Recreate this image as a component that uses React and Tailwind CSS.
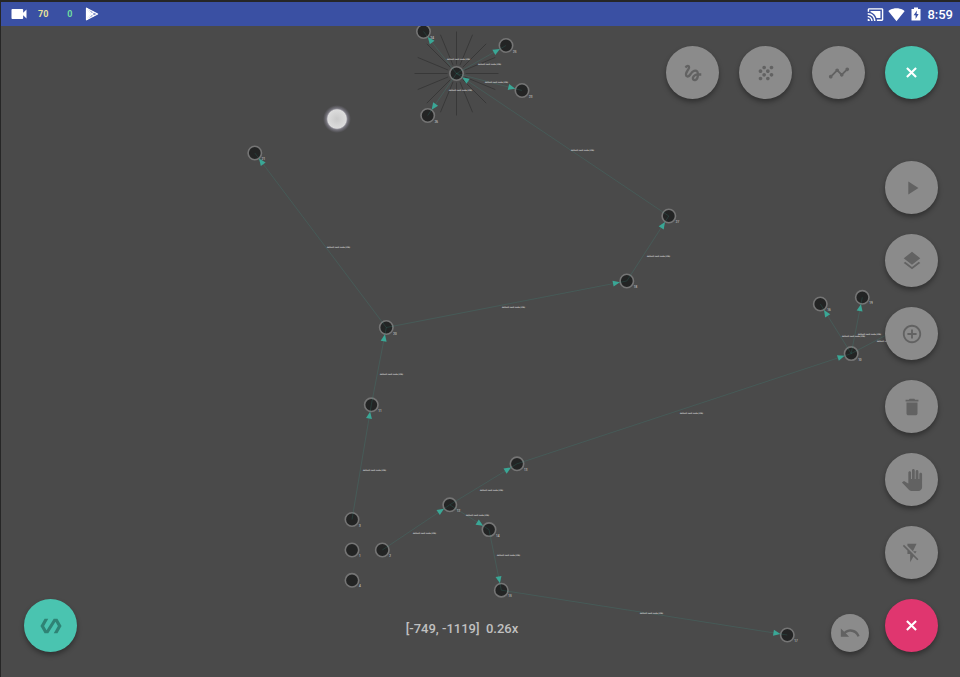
import React from "react";
import {
  MdCastConnected,
  MdControlPoint,
  MdDelete,
  MdFlashOff,
  MdGesture,
  MdGrain,
  MdLayers,
  MdPanTool,
  MdPlayArrow,
  MdPolymer,
  MdSignalWifi4Bar,
  MdTimeline,
  MdUndo,
  MdVideocam,
} from "react-icons/md";

const nodes = {
  a: { x: 423.5, y: 31.5, id: "24" },
  b: { x: 506, y: 45.5, id: "25" },
  hub: { x: 456.5, y: 73.5, id: "" },
  d: { x: 522, y: 90.5, id: "23" },
  e: { x: 427.7, y: 115.5, id: "26" },
  f: { x: 254.8, y: 153, id: "21" },
  g: { x: 668.8, y: 216, id: "27" },
  h: { x: 626.8, y: 281, id: "18" },
  i: { x: 386.3, y: 327.5, id: "20" },
  j: { x: 371.3, y: 404.8, id: "11" },
  k: { x: 352, y: 519.5, id: "3" },
  l: { x: 352, y: 550, id: "1" },
  m: { x: 382.3, y: 550, id: "2" },
  n: { x: 352, y: 580.3, id: "4" },
  o: { x: 449.8, y: 504.8, id: "12" },
  p: { x: 489, y: 529.6, id: "14" },
  q: { x: 517, y: 463.8, id: "13" },
  r: { x: 501.3, y: 590.2, id: "15" },
  s: { x: 787.3, y: 635, id: "17" },
  t: { x: 820.3, y: 304, id: "16" },
  u: { x: 862.3, y: 297.3, id: "19" },
  v: { x: 851.2, y: 353.6, id: "10" },
  w: { x: 911, y: 322, id: "22" },
};

const edges = [
  { from: "hub", to: "a", label: [447, 60] },
  { from: "hub", to: "b", label: [478, 65] },
  { from: "hub", to: "d", label: [485, 83] },
  { from: "hub", to: "e", label: [449, 91] },
  { from: "g", to: "hub", label: [571, 151] },
  { from: "h", to: "g", label: [647, 257] },
  { from: "i", to: "h", label: [502, 308] },
  { from: "i", to: "f", label: [327, 248] },
  { from: "j", to: "i", label: [380, 375] },
  { from: "k", to: "j", label: [363, 471] },
  { from: "m", to: "o", label: [413, 534] },
  { from: "o", to: "q", label: [480, 491] },
  { from: "o", to: "p", label: [466, 516] },
  { from: "p", to: "r", label: [497, 556] },
  { from: "r", to: "s", label: [640, 614] },
  { from: "q", to: "v", label: [680, 414] },
  { from: "v", to: "t", label: [842, 337] },
  { from: "v", to: "u", label: [858, 335] },
  { from: "v", to: "w", label: [877, 342] },
];

const rays = Array.from({ length: 16 }, (_, i) => (i * Math.PI) / 8);

function Arrow({ from, to }) {
  const angle = (Math.atan2(to.y - from.y, to.x - from.x) * 180) / Math.PI;
  return (
    <path
      d="M-7 0 L-14 -3 L-14 3 Z"
      fill="#3aa796"
      transform={`translate(${to.x} ${to.y}) rotate(${angle})`}
    />
  );
}

function Graph() {
  const { hub } = nodes;
  return (
    <svg className="absolute inset-0 h-full w-full" aria-label="Node graph">
      <defs>
        <radialGradient id="touch">
          <stop offset="0" stopColor="#c9c9c9" />
          <stop offset="0.66" stopColor="#dcdcdc" />
          <stop offset="0.76" stopColor="#a9a6b6" stopOpacity="0.5" />
          <stop offset="1" stopColor="#8a869c" stopOpacity="0" />
        </radialGradient>
      </defs>
      {Object.entries(nodes).map(([key, n]) => (
        <circle key={key} cx={n.x} cy={n.y} r="6.7" fill="#232424" stroke="#757575" strokeWidth="1.6" />
      ))}
      {rays.map((a) => (
        <line
          key={a}
          x1={hub.x + 9 * Math.cos(a)}
          y1={hub.y + 9 * Math.sin(a)}
          x2={hub.x + 42 * Math.cos(a)}
          y2={hub.y + 42 * Math.sin(a)}
          stroke="#303030"
          strokeOpacity="0.7"
        />
      ))}
      {edges.map(({ from, to }) => (
        <g key={from + to}>
          <line
            x1={nodes[from].x}
            y1={nodes[from].y}
            x2={nodes[to].x}
            y2={nodes[to].y}
            stroke="#3aa796"
            strokeOpacity="0.18"
          />
          <Arrow from={nodes[from]} to={nodes[to]} />
        </g>
      ))}
      <g className="fill-[#b4b4b4] stroke-[#b4b4b4] font-['DejaVu_Sans',sans-serif] text-[2px]" strokeWidth="0.15">
        {edges.map(({ from, to, label }) => (
          <text key={from + to} x={label[0]} y={label[1]}>
            default next node (0%)
          </text>
        ))}
      </g>
      <g className="fill-[#a8a8a8] stroke-[#a8a8a8] font-[Roboto,sans-serif] text-[3px]" strokeWidth="0.15">
        {Object.entries(nodes).map(([key, n]) => (
          <text key={key} x={n.x + 7} y={n.y + 7}>
            {n.id}
          </text>
        ))}
      </g>
      <circle cx="337" cy="119" r="14" fill="url(#touch)" />
    </svg>
  );
}

const tones = {
  gray: "bg-[#8b8b8b] text-[#626262]",
  teal: "bg-[#4ac4b0] text-white",
  tealDark: "bg-[#4ac4b0] text-[#2f8375]",
  pink: "bg-[#e0366f] text-white",
};

function Fab({ label, tone = "gray", small = false, children }) {
  const size = small ? "size-[38px]" : "size-[53px]";
  return (
    <button
      type="button"
      aria-label={label}
      className={`flex shrink-0 items-center justify-center rounded-full shadow-[0_3px_5px_rgba(0,0,0,0.35)] ${size} ${tones[tone]}`}
    >
      {children}
    </button>
  );
}

function Cross() {
  return (
    <svg className="size-[11px]" viewBox="0 0 12 12" fill="none" stroke="currentColor" strokeWidth="2.3">
      <path d="M1 1 L11 11 M11 1 L1 11" />
    </svg>
  );
}

function StatusBar() {
  return (
    <header className="relative flex h-6 items-center justify-between bg-[#3a50a3] pr-[7px] pl-2 text-white">
      <div className="flex items-center text-[9px] leading-none font-bold">
        <MdVideocam className="size-5" />
        <span className="ml-[9px] text-[#e8e29a]">70</span>
        <span className="ml-[19px] text-[#6fdca0]">0</span>
        <svg className="ml-3 size-[14px]" viewBox="0 0 14 14" aria-hidden="true">
          <path d="M1.5 1.2 L12.6 7 L1.5 12.8 Z" fill="#7f8ec8" stroke="#fff" strokeWidth="1.2" strokeLinejoin="round" />
          <path d="M1.5 1.2 L8.8 9 M1.5 12.8 L8.8 5" stroke="#fff" strokeWidth="1.2" />
          <path d="M1.5 2 L6.4 7 L1.5 12 Z" fill="#fff" />
        </svg>
      </div>
      <div className="flex items-center">
        <MdCastConnected className="size-[17px]" />
        <MdSignalWifi4Bar className="ml-1 size-[17px]" />
        <svg className="ml-[6px] h-[14px] w-[10px]" viewBox="0 0 10 14" aria-hidden="true">
          <path d="M3 0.5 H7 V2 H9.5 V13.5 H0.5 V2 H3 Z" fill="#fff" />
          <path d="M6 3.5 L2.6 8.2 H4.6 V12 L7.6 7 H5.6 Z" fill="#3a50a3" />
        </svg>
        <time className="ml-[6px] text-[13px] leading-none font-medium">8:59</time>
      </div>
    </header>
  );
}

export default function App() {
  return (
    <div className="relative flex min-h-screen flex-col overflow-hidden border-t-2 border-l border-[#262626] bg-[#4a4a4a] font-[Roboto,sans-serif]">
      <div className="absolute -top-0.5 right-0 bottom-0 -left-px">
        <Graph />
      </div>
      <StatusBar />
      <main className="relative flex flex-1 flex-col justify-between gap-5 pt-5 pr-[22px] pb-[25px] pl-[23px]">
        <div className="flex justify-end gap-5">
          <Fab label="Gesture"><MdGesture className="size-[22px]" /></Fab>
          <Fab label="Points"><MdGrain className="size-[22px]" /></Fab>
          <Fab label="Path"><MdTimeline className="size-[22px]" /></Fab>
          <Fab label="Close tools" tone="teal"><Cross /></Fab>
        </div>
        <div className="flex items-end">
          <Fab label="Diagram" tone="tealDark"><MdPolymer className="size-[22px]" /></Fab>
          <p className="ml-4 flex-1 pb-[15px] text-center text-[13px] leading-4 font-medium whitespace-pre text-[#c0c0c0]">
            {"[-749, -1119]  0.26x"}
          </p>
          <Fab label="Undo" small><MdUndo className="size-[22px]" /></Fab>
          <div className="ml-4 flex flex-col gap-5">
            <Fab label="Play"><MdPlayArrow className="size-[22px]" /></Fab>
            <Fab label="Layers"><MdLayers className="size-[22px]" /></Fab>
            <Fab label="Add node"><MdControlPoint className="size-[22px]" /></Fab>
            <Fab label="Delete"><MdDelete className="size-[22px]" /></Fab>
            <Fab label="Pan"><MdPanTool className="size-[22px]" /></Fab>
            <Fab label="Disable flash"><MdFlashOff className="size-[22px]" /></Fab>
            <Fab label="Close menu" tone="pink"><Cross /></Fab>
          </div>
        </div>
      </main>
    </div>
  );
}
